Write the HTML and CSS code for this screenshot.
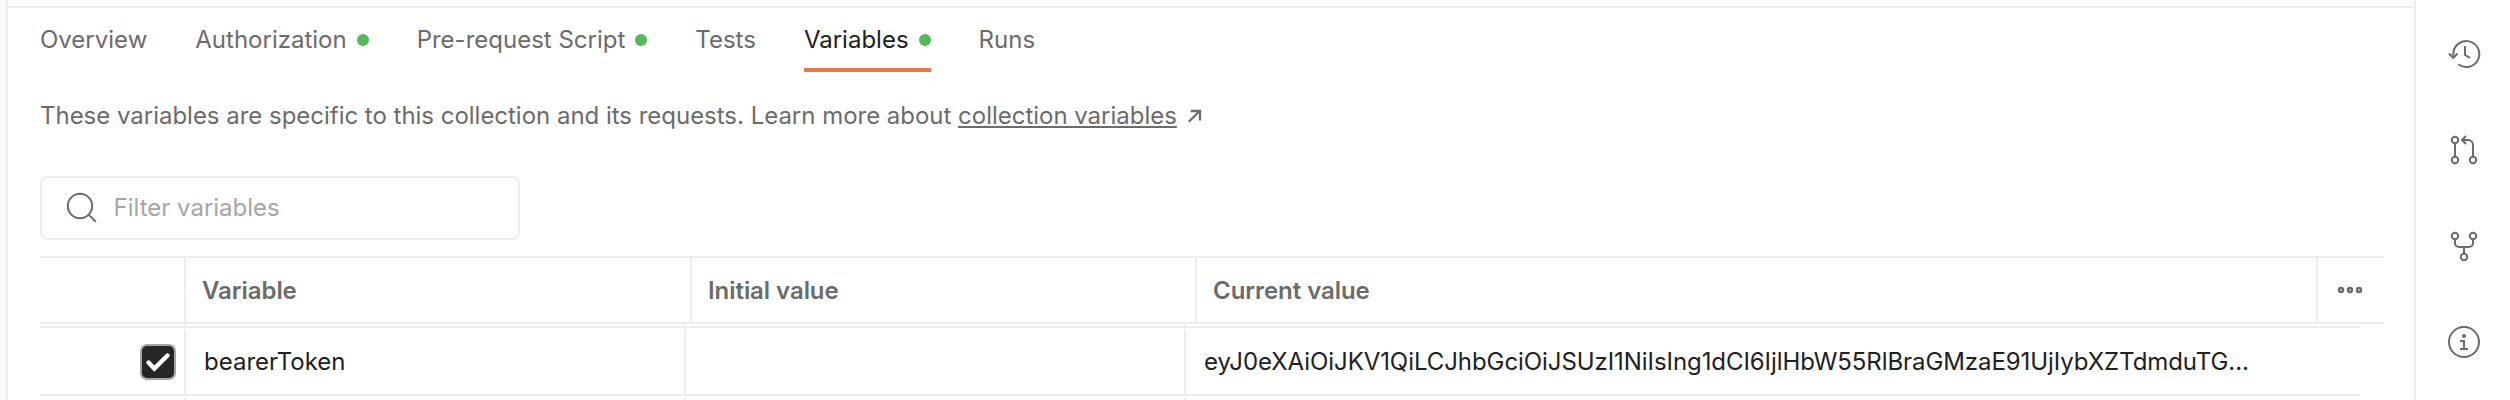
FILE: index.html
```html
<!DOCTYPE html>
<html lang="en">
<head>
<meta charset="utf-8">
<title>Collection variables</title>
<link rel="stylesheet" href="styles.css">
</head>
<body>
<div class="app">
  <div class="gutter"></div>
  <main class="main">
    <nav class="tabs">
      <a class="tab"><span>Overview</span></a>
      <a class="tab"><span>Authorization</span><i class="dot"></i></a>
      <a class="tab"><span>Pre-request Script</span><i class="dot"></i></a>
      <a class="tab"><span>Tests</span></a>
      <a class="tab active"><span>Variables</span><i class="dot"></i></a>
      <a class="tab"><span>Runs</span></a>
    </nav>
    <p class="desc"><span>These variables are specific to this collection and its requests. Learn more about <a class="link">collection variables</a></span><svg class="ext" width="14" height="14" viewBox="0 0 14 14"><path d="M.8 12.800 11.600 2M2.700 2H12v9.600"/></svg></p>
    <div class="filter">
      <svg class="search" width="32" height="32" viewBox="0 0 32 32"><circle cx="14" cy="14" r="12.2"/><path d="m22.6 22.6 7.2 7.2"/></svg>
      <span>Filter variables</span>
    </div>
    <div class="thead">
      <div class="th"></div>
      <div class="th">Variable</div>
      <div class="th">Initial value</div>
      <div class="th">Current value</div>
      <div class="th more"><svg width="26" height="8" viewBox="0 0 26 8"><circle cx="4" cy="4" r="2.2"/><circle cx="13" cy="4" r="2.2"/><circle cx="22" cy="4" r="2.2"/></svg></div>
    </div>
    <div class="row spacer"><div class="td"></div><div class="td"></div><div class="td"></div><div class="td"></div></div>
    <div class="row">
      <div class="td check"><span class="box"><svg width="32" height="32" viewBox="0 0 32 32"><path d="m6.500 16.500 5.800 6L25.500 9.500"/></svg></span></div>
      <div class="td">bearerToken</div>
      <div class="td"></div>
      <div class="td token">eyJ0eXAiOiJKV1QiLCJhbGciOiJSUzI1NiIsIng1dCI6IjlHbW55RlBraGMzaE91UjIybXZTdmduTG...</div>
    </div>
    <div class="row last"><div class="td"></div><div class="td"></div><div class="td"></div><div class="td"></div></div>
  </main>
  <aside class="side">
    <svg width="36" height="36" viewBox="0 0 36 36"><path d="M7.300 19.500V18A13 13 0 1 1 12.300 28.300M3 17.500l4.300 4.300 4.300-4.300M19 10v9l5 2.800"/></svg>
    <svg width="36" height="36" viewBox="0 0 36 36"><circle cx="9" cy="8" r="3.200"/><circle cx="9" cy="28" r="3.200"/><circle cx="27" cy="28" r="3.200"/><path d="M9 11.200v13.600M27 24.800V13a5 5 0 0 0-5-5h-6M20 4l-4 4 4 4"/></svg>
    <svg width="36" height="36" viewBox="0 0 36 36"><circle cx="9" cy="8" r="3.200"/><circle cx="27" cy="8" r="3.200"/><circle cx="18" cy="29" r="3.200"/><path d="M9 11.200V15a4 4 0 0 0 4 4h10a4 4 0 0 0 4-4v-3.800M18 19v6.800"/></svg>
    <svg width="36" height="36" viewBox="0 0 36 36"><circle cx="18" cy="18" r="15"/><path d="M14 17h4v8M14 25h8"/><circle class="fill" cx="18" cy="12" r="2"/></svg>
  </aside>
</div>
</body>
</html>
```
FILE: styles.css
```css
* { box-sizing: border-box; }
body {
  margin: 0;
  background: #fff;
  color: #6b6b6b;
  font: 24px/32px Inter, "Liberation Sans", sans-serif;
}
.app { display: flex; height: 400px; overflow: hidden; }
.gutter { width: 8px; background: #f9f9f9; border-right: 2px solid #ededed; }
.main { width: 2406px; padding: 6px 0 0 32px; position: relative; }
.main::before {
  content: "";
  position: absolute;
  left: 0; top: 6px; right: 0;
  height: 2px;
  background: #ededed;
}
.tabs { display: flex; gap: 48px; height: 66px; }
.tab {
  display: flex;
  align-items: center;
  gap: 10px;
  height: 66px;
  padding-top: 6px;
  border-bottom: 4px solid transparent;
}
.tab.active { color: #212121; border-color: #f07547; }
.dot { width: 12px; height: 12px; border-radius: 50%; background: #55b85b; }
.desc {
  display: flex;
  align-items: center;
  gap: 11px;
  height: 32px;
  margin: 28px 0 0;
  letter-spacing: -0.02px;
}
.link {
  text-decoration: underline;
  text-decoration-thickness: 2px;
  text-underline-offset: 2px;
}
svg { fill: none; stroke: #6b6b6b; stroke-width: 2; flex: none; }
.ext { stroke-width: 2.3; }
.filter {
  display: flex;
  align-items: center;
  gap: 15.5px;
  width: 480px;
  height: 64px;
  margin-top: 44px;
  padding-left: 24px;
  border: 2px solid #ededed;
  border-radius: 8px;
  color: #a6a6a6;
}
.thead {
  display: grid;
  grid-template-columns: 144px 506px 505px 1121px 68px;
  width: 2344px;
  height: 68px;
  margin-top: 16px;
  border: solid #ededed;
  border-width: 2px 0;
  font-weight: 600;
  letter-spacing: -0.05px;
}
.th { display: flex; align-items: center; padding: 2px 0 0 16px; border-left: 2px solid #ededed; }
.th:first-child { border-left: 0; }
.th.more { padding: 0 0 0 19px; }
.th.more svg { fill: #b0b0b0; }
.row {
  display: grid;
  grid-template-columns: 144px 500px 500px 1176px;
  width: 2320px;
  height: 68px;
  padding-top: 2px;
  border-bottom: 2px solid #ededed;
  color: #212121;
}
.td { display: flex; align-items: center; padding-left: 18px; border-left: 2px solid #ededed; white-space: nowrap; }
.td:first-child { border-left: 0; }
.token { letter-spacing: -0.07px; }
.row.spacer { height: 4px; padding: 0; }
.row.last { border: 0; }
.check { padding-left: 100px; }
.box { width: 36px; height: 36px; border: 2px solid #a6a6a6; border-radius: 7px; background: #262626; }
.box svg { display: block; stroke: #fff; stroke-width: 4.4; stroke-linecap: round; }
.side {
  width: 96px;
  border-left: 2px solid #ededed;
  padding: 36px 0 0 30px;
  display: flex;
  flex-direction: column;
  gap: 60px;
}
.side .fill { fill: #6b6b6b; stroke: none; }
```
